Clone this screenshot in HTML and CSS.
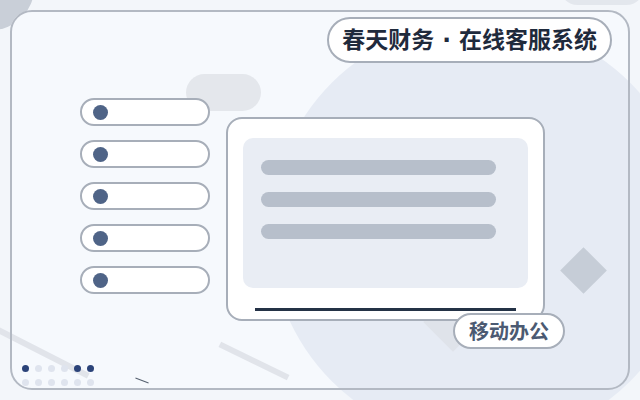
FILE: index.html
```html
<!DOCTYPE html>
<html lang="zh-CN">
<head>
    <meta charset="UTF-8">
    <meta name="viewport" content="width=device-width, initial-scale=1.0">
    <title>春天财务 · 在线客服系统</title>
    <link rel="stylesheet" href="styles.css">
</head>
<body>
    <div class="stage">
        <div class="blob blob-corner"></div>
        <div class="blob blob-tab"></div>
        <div class="frame-fill"></div>
        <div class="blob blob-orb"></div>
        <div class="blob blob-cloud"></div>
        <div class="streak streak-a"></div>
        <div class="streak streak-b"></div>
        <div class="gem gem-under"></div>

        <div class="frame">
            <header class="frame-head">
                <div class="title-pill">春天财务 · 在线客服系统</div>
            </header>

            <div class="frame-body">
                <ul class="menu">
                    <li><span class="menu-dot"></span></li>
                    <li><span class="menu-dot"></span></li>
                    <li><span class="menu-dot"></span></li>
                    <li><span class="menu-dot"></span></li>
                    <li><span class="menu-dot"></span></li>
                </ul>

                <div class="window">
                    <div class="window-panel">
                        <div class="bar"></div>
                        <div class="bar"></div>
                        <div class="bar"></div>
                    </div>
                    <div class="window-rule"></div>
                    <div class="badge">移动办公</div>
                </div>
            </div>

            <div class="gem gem-side"></div>

            <div class="dots">
                <span class="dot on"></span>
                <span class="dot"></span>
                <span class="dot"></span>
                <span class="dot"></span>
                <span class="dot on"></span>
                <span class="dot on"></span>
                <span class="dot"></span>
                <span class="dot"></span>
                <span class="dot"></span>
                <span class="dot"></span>
                <span class="dot"></span>
                <span class="dot"></span>
            </div>
            <div class="tick"></div>
        </div>
    </div>
</body>
</html>
```

FILE: styles.css
```css
body {
    margin: 0;
    background-color: #f3f6fa;
    font-family: "Noto Sans CJK SC", "Noto Sans", sans-serif;
}
.stage {
    position: relative;
    width: 640px;
    height: 400px;
    padding: 10px;
    box-sizing: border-box;
    overflow: hidden;
}

/* background decoration */
.blob {
    position: absolute;
    border-radius: 50%;
}
.blob-corner {
    left: -50px;
    top: -54px;
    width: 84px;
    height: 84px;
    background-color: #c9cfd8;
}
.blob-tab {
    left: 560px;
    top: -30px;
    width: 84px;
    height: 35px;
    border-radius: 18px;
    background-color: #e3e7ed;
}
.frame-fill {
    position: absolute;
    left: 10px;
    top: 10px;
    width: 620px;
    height: 380px;
    border-radius: 22px;
    background-color: #f6f9fd;
}
.blob-orb {
    left: 270px;
    top: 21px;
    width: 422px;
    height: 422px;
    background-color: #e6ebf4;
}
.blob-cloud {
    left: 186px;
    top: 74px;
    width: 75px;
    height: 37px;
    border-radius: 19px;
    background-color: #e4e7ec;
}
.streak {
    position: absolute;
    height: 6px;
    background-color: #e1e4ea;
}
.streak-a {
    left: -11px;
    top: 349px;
    width: 105px;
    transform: rotate(27deg);
}
.streak-b {
    left: 216px;
    top: 358px;
    width: 76px;
    transform: rotate(26deg);
}
.gem {
    position: absolute;
    transform: rotate(45deg);
}
.gem-under {
    left: 432px;
    top: 301px;
    width: 42px;
    height: 42px;
    background-color: #dfe3ea;
}

/* frame */
.frame {
    position: relative;
    height: 100%;
    border: 2px solid #b3b9c3;
    border-radius: 22px;
    box-sizing: border-box;
    padding: 5px 16px 0 68px;
}
.frame-head {
    display: flex;
    justify-content: flex-end;
}
.title-pill {
    height: 46px;
    box-sizing: border-box;
    padding: 0 13px;
    border: 2px solid #a7aeb9;
    border-radius: 23px;
    background-color: #fff;
    color: #1f2a3c;
    font-family: "DejaVu Sans", "Noto Sans CJK SC", sans-serif;
    font-size: 23px;
    font-weight: 700;
    line-height: 42px;
    white-space: nowrap;
}
.frame-body {
    display: flex;
    align-items: flex-start;
    margin-top: 35px;
}

/* left menu */
.menu {
    list-style: none;
    margin: 0;
    padding: 0;
    width: 130px;
    display: flex;
    flex-direction: column;
    gap: 14px;
}
.menu li {
    height: 28px;
    box-sizing: border-box;
    border: 2px solid #a7aeb9;
    border-radius: 14px;
    background-color: #fff;
    display: flex;
    align-items: center;
    padding-left: 11px;
}
.menu-dot {
    width: 15px;
    height: 15px;
    border-radius: 50%;
    background-color: #4f6487;
}

/* window */
.window {
    position: relative;
    margin: 19px 0 0 16px;
    width: 319px;
    height: 204px;
    box-sizing: border-box;
    border: 2px solid #a7aeb9;
    border-radius: 16px;
    background-color: #fff;
    padding: 19px 15px 8px 15px;
}
.window-panel {
    height: 150px;
    box-sizing: border-box;
    border-radius: 10px;
    background-color: #e9edf4;
    padding: 22px 0 0 18px;
    display: flex;
    flex-direction: column;
    gap: 17px;
}
.bar {
    width: 235px;
    height: 15px;
    border-radius: 8px;
    background-color: #b7bfcb;
}
.window-rule {
    margin: 20px 0 0 12px;
    width: 261px;
    height: 3px;
    background-color: #243246;
}
.badge {
    position: absolute;
    left: 225px;
    top: 194px;
    height: 36px;
    box-sizing: border-box;
    padding: 0 14px;
    border: 2px solid #a7aeb9;
    border-radius: 18px;
    background-color: #fff;
    color: #4b5a72;
    font-size: 20px;
    font-weight: 700;
    line-height: 32px;
    white-space: nowrap;
}

/* frame decoration */
.gem-side {
    left: 555px;
    top: 242px;
    width: 33px;
    height: 33px;
    background-color: #c6cdd7;
}
.dots {
    position: absolute;
    left: 10px;
    top: 353px;
    display: grid;
    grid-template-columns: repeat(6, 7px);
    gap: 7px 6px;
}
.dot {
    width: 7px;
    height: 7px;
    border-radius: 50%;
    background-color: #dfe4ee;
}
.dot.on {
    background-color: #2b4379;
}
.tick {
    position: absolute;
    left: 123px;
    top: 368px;
    width: 14px;
    height: 1px;
    background-color: #55606f;
    transform: rotate(21deg);
}
```
